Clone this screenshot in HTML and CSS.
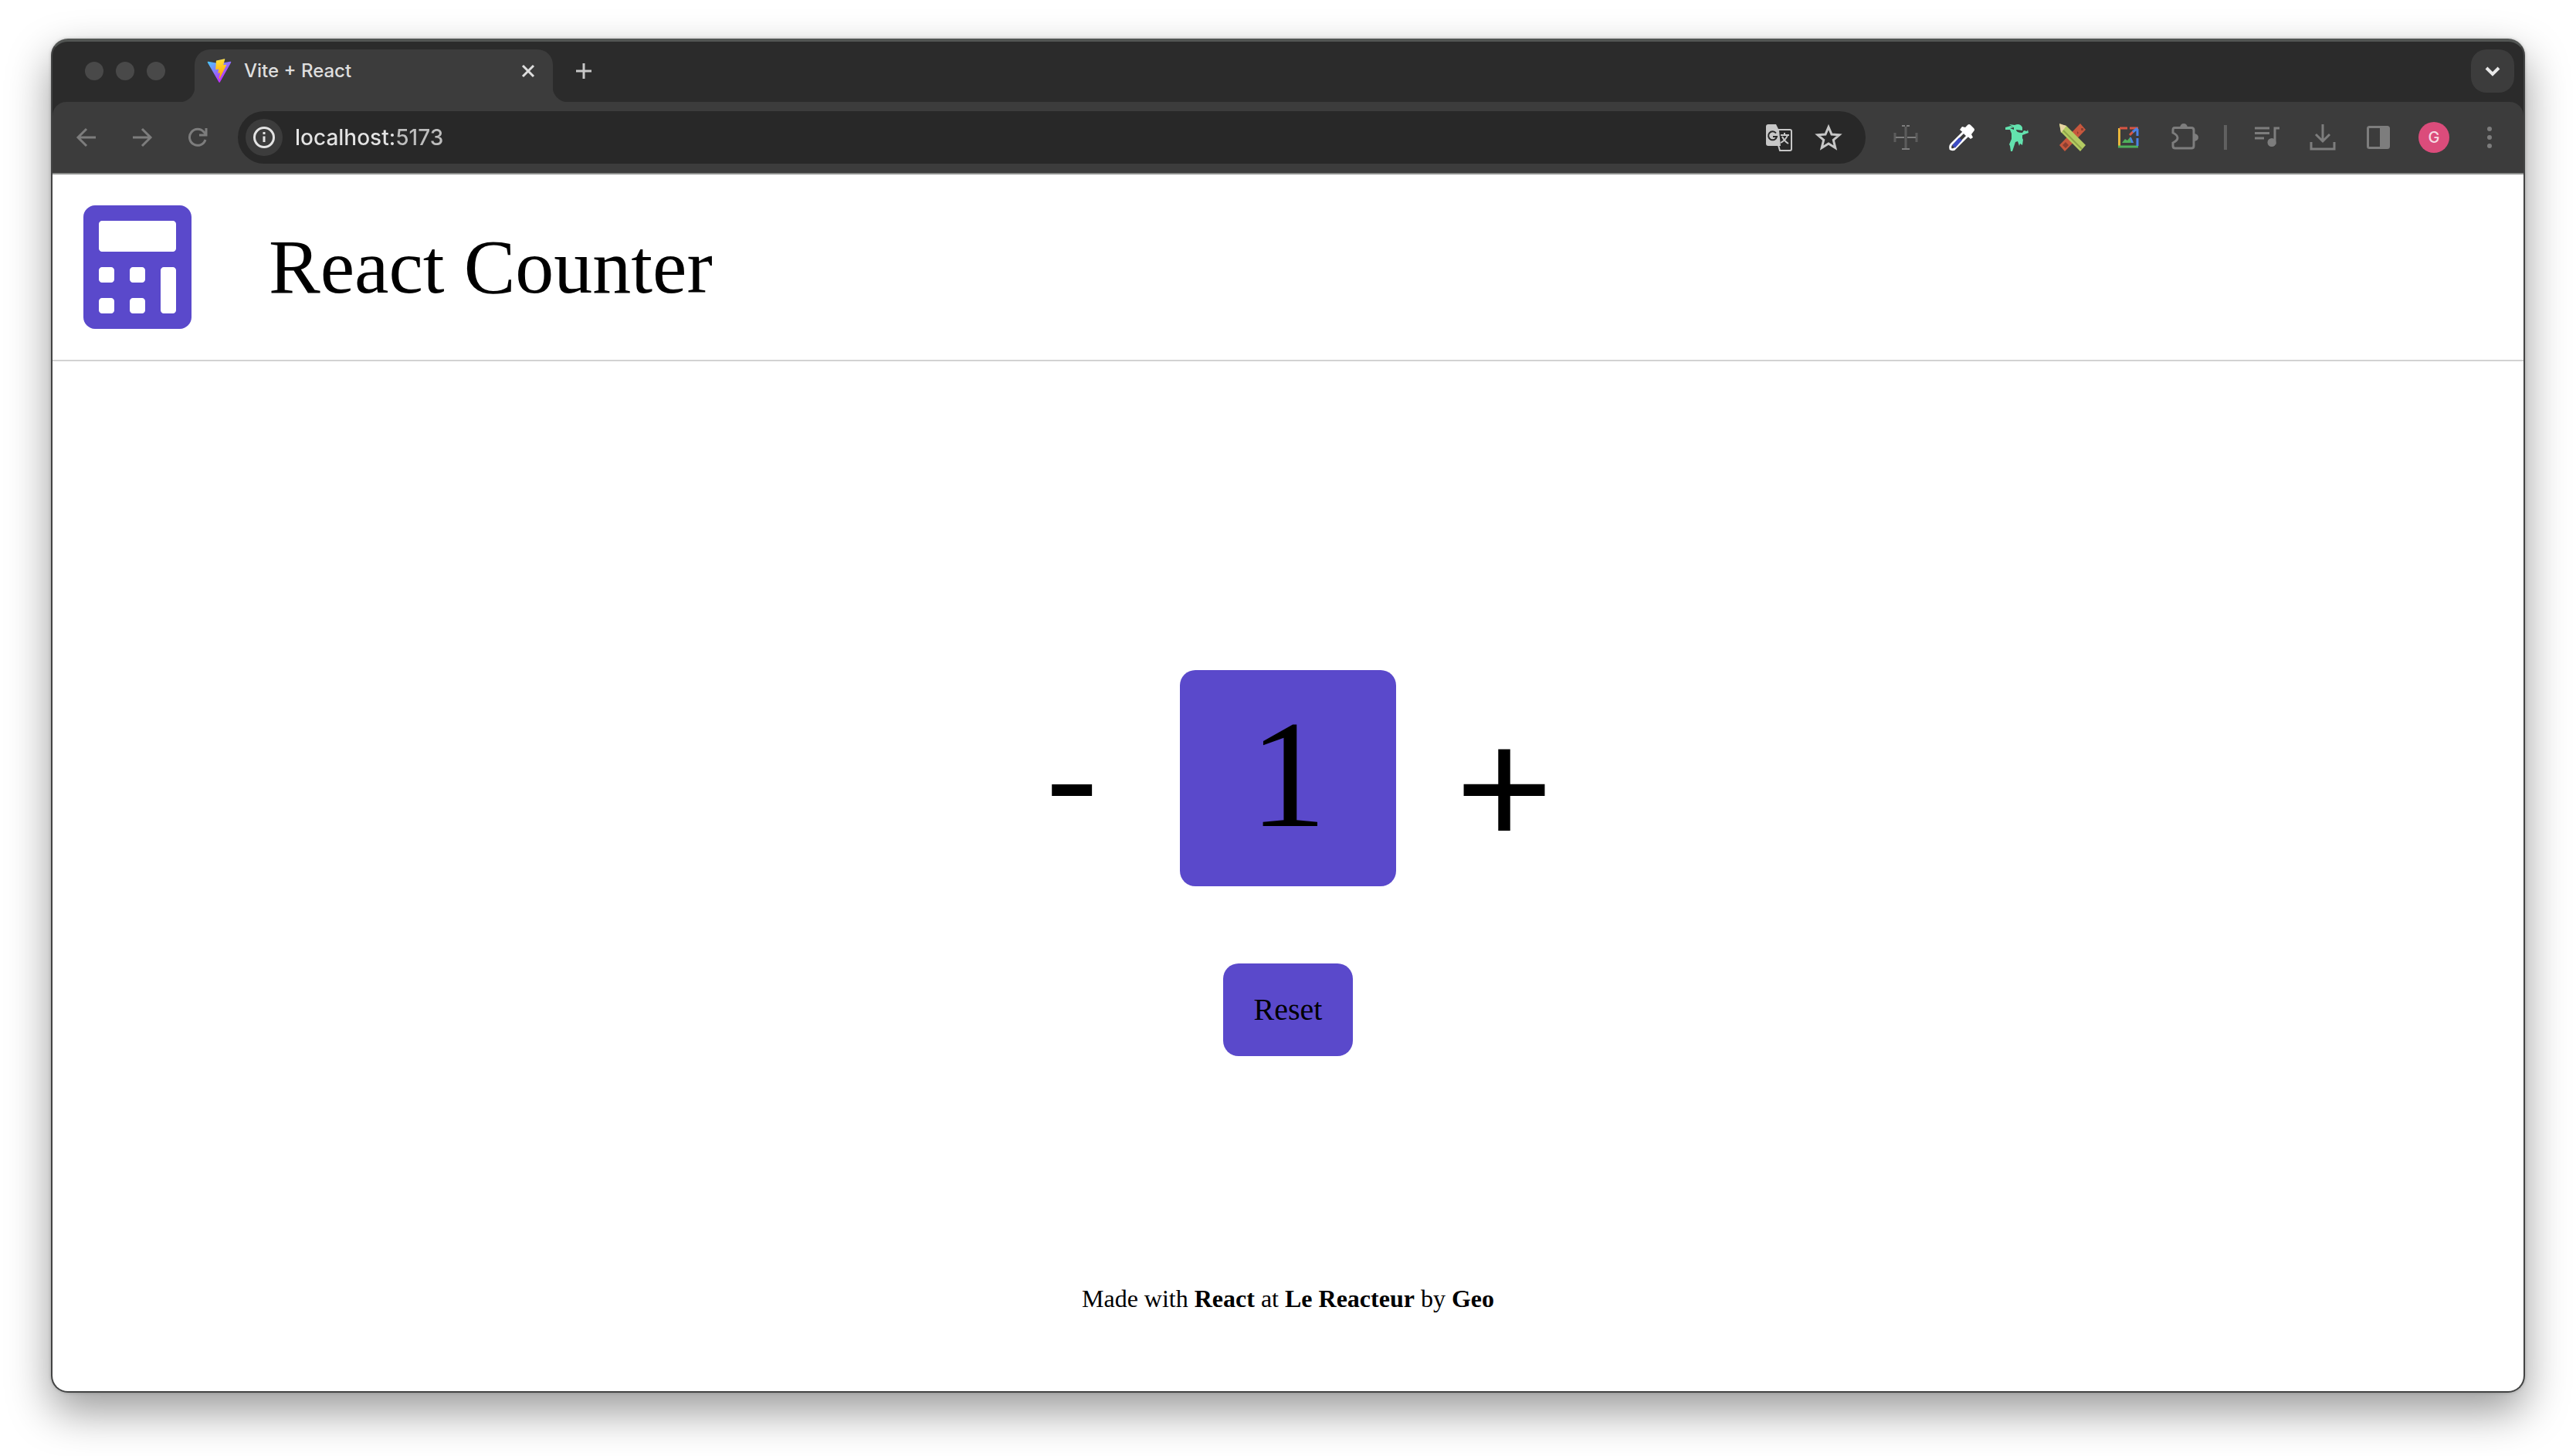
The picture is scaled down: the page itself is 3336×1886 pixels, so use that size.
FILE: index.html
```html
<!DOCTYPE html>
<html lang="en">
<head>
<meta charset="utf-8">
<meta name="viewport" content="width=device-width, initial-scale=1">
<title>Vite + React</title>
<link rel="stylesheet" href="styles.css">
</head>
<body>
<div class="window">
  <div class="tabstrip">
    <div class="lights"><span class="light"></span><span class="light"></span><span class="light"></span></div>
    <div class="tab">
      <svg class="favicon" viewBox="0 0 410 404" aria-hidden="true">
        <defs>
          <linearGradient id="va" x1="6" y1="33" x2="235" y2="344" gradientUnits="userSpaceOnUse"><stop stop-color="#41D1FF"/><stop offset="1" stop-color="#BD34FE"/></linearGradient>
          <linearGradient id="vb" x1="194" y1="9" x2="236" y2="292" gradientUnits="userSpaceOnUse"><stop stop-color="#FFEA83"/><stop offset=".083" stop-color="#FFDD35"/><stop offset="1" stop-color="#FFA800"/></linearGradient>
        </defs>
        <path fill="url(#va)" d="M399.641 59.525 215.643 388.545c-3.799 6.793-13.559 6.833-17.415.073L10.582 59.556C6.38 52.19 12.68 43.267 21.028 44.76l184.195 32.923c1.175.21 2.378.208 3.553-.006l180.343-32.87c8.32-1.517 14.649 7.337 10.522 14.719z"/>
        <path fill="url(#vb)" d="M292.965 1.574 156.801 28.255a5 5 0 0 0-4.03 4.611l-8.376 141.464c-.197 3.332 2.863 5.918 6.115 5.168l37.91-8.749c3.547-.818 6.752 2.306 6.023 5.873l-11.263 55.153c-.758 3.712 2.727 6.886 6.352 5.785l23.415-7.114c3.63-1.102 7.118 2.081 6.35 5.796l-17.899 86.633c-1.12 5.419 6.088 8.374 9.094 3.728l2.008-3.103 110.954-221.428c1.858-3.707-1.346-7.935-5.418-7.15l-39.022 7.532c-3.667.707-6.787-2.708-5.752-6.296l25.469-88.291c1.036-3.594-2.095-7.012-5.766-6.293z"/>
      </svg>
      <span class="tab-title">Vite + React</span>
      <button class="tab-close" aria-label="Close tab"><svg class="icon-s" viewBox="0 0 20 20"><path d="M3 3 17 17M17 3 3 17"/></svg></button>
    </div>
    <button class="square new-tab" aria-label="New tab"><svg class="icon-m" viewBox="0 0 24 24"><path d="M12 2V22M2 12H22"/></svg></button>
    <button class="square tab-search" aria-label="Search tabs"><svg class="icon-m" viewBox="0 0 24 24"><path d="M4 8 12 16 20 8"/></svg></button>
  </div>

  <div class="toolbar">
    <div class="group nav">
      <button class="tool" aria-label="Back"><svg viewBox="0 0 32 32"><path d="M28 16H6M16 5 5 16 16 27"/></svg></button>
      <button class="tool" aria-label="Forward"><svg viewBox="0 0 32 32"><path d="M4 16H26M16 5 27 16 16 27"/></svg></button>
      <button class="tool" aria-label="Reload"><svg viewBox="0 0 32 32"><path d="M26 19A10.500 10.500 0 1 1 24 9L27 12M27 4V13H18"/></svg></button>
    </div>
    <div class="omnibox">
      <button class="site-info" aria-label="Site information"><svg viewBox="0 0 32 32"><circle cx="16" cy="16" r="12.500"/><path d="M16 14.500V22M16 9V12"/></svg></button>
      <input class="address" type="text" aria-label="Address" value="localhost:5173">
      <button class="inner-tool" aria-label="Translate this page"><svg viewBox="0 0 36 36">
        <path class="solid" d="M4 1H14L18 9 20 29H4Q1 29 1 26V4Q1 1 4 1Z"/>
        <path class="thin" d="M17 8H32Q34 8 34 10V33Q34 35 32 35H19L17 28M20 15H31M25 12V15M29 15Q27 21 20 25M22 17Q25 23 30 26"/>
        <path class="cut" d="M14 12.500A5.500 5.500 0 1 0 15 17H10"/>
      </svg></button>
      <button class="inner-tool" aria-label="Bookmark this tab"><svg viewBox="0 0 36 36"><path d="M18 4.500 22 14 32 14.800 24.300 21.400 26.800 31.500 18 26 9.200 31.500 11.700 21.400 4 14.800 14 14Z"/></svg></button>
    </div>
    <div class="group">
      <button class="tool" aria-label="Page ruler"><svg viewBox="0 0 36 36"><path class="faint" d="M18 4V32M4 12V24M32 12V24"/><path class="thin" d="M5 18H16M20 18H31M13 3H17M19 3H23M13 33H23"/></svg></button>
      <button class="tool" aria-label="Colour picker"><svg viewBox="0 0 36 36">
        <path fill="#fff" stroke="none" d="M23 5 26 2Q28 0 30 2L34 6Q36 8 34 10L31 14 33 18 30 20 16 8 19 4Z"/>
        <path stroke="#fff" fill="#3c3c3c" d="M21 11 5 27Q3 29 4 33Q8 35 10 32L26 16Z"/>
        <path stroke="#3c4cc4" stroke-width="5" d="M8 30 17 20"/>
      </svg></button>
      <button class="tool" aria-label="Dancing figure extension"><svg viewBox="0 0 36 36"><path fill="#63e2ae" stroke="none" d="M3 5 10 3 14 5 9 6 14 8V5L8 1 15 2Q22 -1 25 5V9L17 8Q17 12 25 12L27 9 31 10 32 8 33 12 25 15V19L26 21 25 28 22 26 21 29 19 23 16 24 14 30 12 36H10L9 29 8 27 11 20 11 13 9 8 3 8Z"/></svg></button>
      <button class="tool" aria-label="Pencil and ruler extension"><svg viewBox="0 0 36 36">
        <path fill="#c7573d" stroke="none" d="M28 0 35 8 8 36 1 28Z"/><path fill="#8c3f31" stroke="none" d="M29 6h3v3h-3zM24 10l2 2-2 2zM9 24l4 4-4 4-4-4z"/>
        <path fill="#b4cb62" stroke="none" d="M10 3 35 28 28 36 3 11 1 1Z"/><path fill="#e8d5a2" stroke="none" d="M1 0 10 3 7 7 3 12Z"/><path stroke="#8ea449" stroke-width="2" d="M6 9 30 33"/>
      </svg></button>
      <button class="tool" aria-label="Image extension"><svg viewBox="0 0 36 36">
        <path stroke="#e8b63c" d="M6.500 6V31"/><path stroke="#4faf5b" d="M5 30H31"/><path stroke="#d95543" d="M7 6H17M20 6H31M20 15 25 10"/><path stroke="#4b83e8" d="M30 7V16M30 19V29M24 11 30 6"/><path fill="#4faf5b" stroke="none" d="M10 25 14 20 17 22 21 17 25 25Z"/><path fill="#4b83e8" stroke="none" d="M20 18 22 18 25 25H22Z"/>
      </svg></button>
      <button class="tool" aria-label="Extensions"><svg viewBox="0 0 36 36"><path d="M6 5.500H28Q31 5.500 31 8.500V29Q31 32 28 32H7Q4 32 4 29V25Q10 22 10 18.500T4 12V8.500Q4 5.500 6 5.500Z"/><path class="solid" d="M13 5Q14 0 18 0T23 5ZM32 13Q37 14 37 18T32 23Z"/></svg></button>
      <span class="divider"></span>
      <button class="tool" aria-label="Media controls"><svg viewBox="0 0 36 36"><path d="M2 6H21M2 12.500H21M2 19H14M28 27V6H34"/><circle class="solid" cx="24" cy="24.500" r="5.500"/></svg></button>
      <button class="tool" aria-label="Downloads"><svg viewBox="0 0 36 36"><path d="M18 1V23M9 14 18 23 27 14M3 24V33H33V24"/></svg></button>
      <button class="tool" aria-label="Side panel"><svg viewBox="0 0 36 36"><rect x="4.500" y="4.500" width="27" height="27" rx="2"/><path class="solid" d="M20 4H32V32H20Z"/></svg></button>
      <button class="tool" aria-label="Profile"><span class="avatar">G</span></button>
      <button class="tool" aria-label="Menu"><svg viewBox="0 0 36 36"><g class="solid"><circle cx="18" cy="7" r="3"/><circle cx="18" cy="18" r="3"/><circle cx="18" cy="29" r="3"/></g></svg></button>
    </div>
  </div>

  <div class="page">
    <header class="header">
      <svg class="logo" viewBox="0 0 448 512" aria-hidden="true"><path d="M400 0H48C22.400 0 0 22.400 0 48v416c0 25.600 22.400 48 48 48h352c25.600 0 48-22.400 48-48V48c0-25.600-22.400-48-48-48zM128 435.200c0 6.400-6.400 12.800-12.800 12.800H76.800c-6.400 0-12.800-6.400-12.800-12.800v-38.400c0-6.400 6.400-12.800 12.800-12.800h38.400c6.400 0 12.800 6.400 12.800 12.800v38.400zm0-128c0 6.400-6.400 12.800-12.800 12.800H76.800c-6.400 0-12.800-6.400-12.800-12.800v-38.400c0-6.400 6.400-12.800 12.800-12.800h38.400c6.400 0 12.800 6.400 12.800 12.800v38.400zm128 128c0 6.400-6.400 12.800-12.800 12.800h-38.400c-6.400 0-12.800-6.400-12.800-12.800v-38.400c0-6.400 6.400-12.800 12.800-12.800h38.400c6.400 0 12.800 6.400 12.800 12.800v38.400zm0-128c0 6.400-6.400 12.800-12.800 12.800h-38.400c-6.400 0-12.800-6.400-12.800-12.800v-38.400c0-6.400 6.400-12.800 12.800-12.800h38.400c6.400 0 12.800 6.400 12.800 12.800v38.400zm128 128c0 6.400-6.400 12.800-12.800 12.800h-38.400c-6.400 0-12.800-6.400-12.800-12.800V268.800c0-6.400 6.400-12.800 12.800-12.800h38.400c6.400 0 12.800 6.400 12.800 12.800v166.400zm0-256c0 6.400-6.400 12.800-12.800 12.800H76.800c-6.400 0-12.800-6.400-12.800-12.800V76.800C64 70.400 70.400 64 76.800 64h294.400c6.400 0 12.800 6.400 12.800 12.800v102.400z"/></svg>
      <h1 class="title">React Counter</h1>
    </header>
    <main class="main">
      <div class="counter">
        <button class="step" aria-label="Decrease">-</button>
        <output class="value">1</output>
        <button class="step plus" aria-label="Increase">+</button>
      </div>
      <button class="reset">Reset</button>
    </main>
    <footer class="footer"><p>Made with <strong>React</strong> at <strong>Le Reacteur</strong> by <strong>Geo</strong></p></footer>
  </div>
</div>
</body>
</html>
```
FILE: styles.css
```css
:root {
  --purple: #5a49cb;
  --strip: #2b2b2b;
  --bar: #3c3c3c;
  --dim: #7d7d7d;
  --light: #c7c7c7;
}

* { box-sizing: border-box; }

body {
  margin: 0;
  min-height: 100vh;
  display: flex;
  padding: 50px 66px 82px;
  background: #fff;
  font-family: "Liberation Serif", "Times New Roman", serif;
  color: #000;
}

button {
  display: flex;
  align-items: center;
  justify-content: center;
  flex: none;
  padding: 0;
  border: 0;
  background: none;
  font: inherit;
  color: inherit;
}

svg { display: block; overflow: visible; fill: none; stroke: currentColor; stroke-width: 3; }
.solid { fill: currentColor; stroke: none; }
.thin { stroke-width: 2; }
.faint { stroke: #5c5c5c; }
.cut { stroke: #282828; stroke-width: 2; }

.window {
  flex: 1;
  min-width: 0;
  display: flex;
  flex-direction: column;
  border: 2px solid #424343;
  border-top: 4px solid #525553;
  border-radius: 22px;
  background: var(--strip);
  overflow: hidden;
  box-shadow: 0 24px 56px rgba(0, 0, 0, .4), 0 0 4px rgba(0, 0, 0, .2);
}

/* Tab strip */
.tabstrip {
  display: flex;
  align-items: flex-start;
  padding: 10px 12px 0 42px;
  font-family: Inter, "Liberation Sans", sans-serif;
  color: #dedede;
}
.lights { display: flex; gap: 16px; padding-top: 16px; }
.light { width: 24px; height: 24px; border-radius: 50%; background: #494949; }
.tab {
  position: relative;
  display: flex;
  align-items: center;
  gap: 16px;
  width: 464px;
  height: 68px;
  margin-left: 38px;
  padding: 0 16px 12px;
  border-radius: 20px 20px 0 0;
  background: var(--bar);
}
.tab::before, .tab::after {
  content: "";
  position: absolute;
  bottom: 0;
  width: 20px;
  height: 20px;
}
.tab::before { right: 100%; background: radial-gradient(circle at 0 0, transparent 20px, var(--bar) 21px); }
.tab::after { left: 100%; background: radial-gradient(circle at 100% 0, transparent 20px, var(--bar) 21px); }
.favicon { width: 32px; height: 32px; stroke: none; }
.tab-title { flex: 1; font-size: 24px; font-weight: 500; line-height: 32px; }
.tab-close { width: 32px; height: 32px; }
.icon-s { width: 20px; height: 20px; }
.icon-m { width: 24px; height: 24px; }
.square { width: 56px; height: 56px; border-radius: 20px; }
.new-tab { margin-left: 12px; color: var(--light); }
.tab-search { margin-left: auto; background: var(--bar); color: #e8e8e8; }
.tab-search svg { stroke-width: 4; }

/* Toolbar */
.toolbar {
  display: flex;
  gap: 16px;
  padding: 12px 8px;
  border-bottom: 2px solid #8c8e8c;
  border-radius: 18px 18px 0 0;
  background: var(--bar);
  font-family: Inter, "Liberation Sans", sans-serif;
}
.group { display: flex; align-items: center; color: var(--dim); }
.tool { width: 72px; height: 68px; }
.tool svg, .inner-tool svg { width: 36px; height: 36px; }
.nav svg { width: 32px; height: 32px; }
.divider { width: 4px; height: 32px; margin: 0 16px; background: #606060; }
.avatar {
  width: 40px;
  height: 40px;
  border-radius: 50%;
  background: #db4c7b;
  color: #f7dbe4;
  font-size: 20px;
  font-weight: 500;
  line-height: 40px;
}
.omnibox {
  flex: 1;
  min-width: 0;
  display: flex;
  align-items: center;
  height: 68px;
  padding: 0 16px 0 10px;
  border-radius: 34px;
  background: #282828;
  color: var(--light);
}
.site-info { width: 48px; height: 48px; border-radius: 50%; background: var(--bar); color: #e3e3e3; }
.site-info svg { width: 32px; height: 32px; }
.address {
  flex: 1;
  min-width: 0;
  height: 40px;
  margin-left: 16px;
  padding: 0;
  border: 0;
  outline: 0;
  /* host in bright text, port dimmed */
  background: linear-gradient(90deg, #e3e3e3 128px, #bdbdbd 128px) text;
  color: transparent;
  font: 500 28px/40px Inter, "Liberation Sans", sans-serif;
}
.inner-tool { width: 64px; height: 56px; }

/* Page */
.page { flex: 1; display: flex; flex-direction: column; background: #fff; }
.header {
  display: flex;
  align-items: center;
  gap: 100px;
  padding: 40px;
  border-bottom: 2px solid #d2d2d2;
}
.logo { width: 140px; height: 160px; fill: var(--purple); stroke: none; }
.title { margin: 0; font-size: 100px; line-height: 120px; font-weight: 400; }
.main {
  flex: 1;
  display: flex;
  flex-direction: column;
  align-items: center;
  gap: 100px;
  padding: 400px 40px 0;
}
.counter { display: flex; font-size: 200px; line-height: 270px; }
.step, .value { width: 280px; height: 280px; padding-bottom: 8px; text-align: center; }
.plus { padding: 24px 0 0; font-family: "Liberation Sans", Arial, sans-serif; font-size: 216px; }
.value { border-radius: 20px; background: var(--purple); }
.reset {
  height: 120px;
  padding: 0 40px 2px;
  border-radius: 20px;
  background: var(--purple);
  font-size: 40px;
}
.footer { padding: 100px 40px; text-align: center; font-size: 32px; line-height: 40px; }
.footer p { margin: 0; }
```
